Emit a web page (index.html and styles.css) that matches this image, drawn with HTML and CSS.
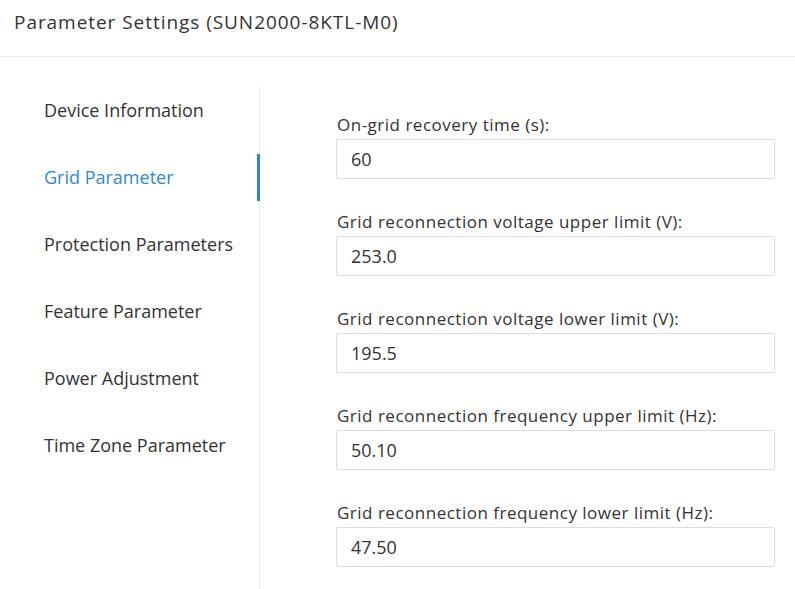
FILE: index.html
```html
<!DOCTYPE html>
<html lang="en">
<head>
<meta charset="utf-8">
<title>Parameter Settings</title>
<link rel="stylesheet" href="styles.css">
</head>
<body>
<header class="page-header">
  <h1 class="page-title">Parameter Settings (SUN2000-8KTL-M0)</h1>
</header>
<main class="layout">
  <nav class="sidebar">
    <ul class="nav-list">
      <li class="nav-item">Device Information</li>
      <li class="nav-item nav-item-active">Grid Parameter</li>
      <li class="nav-item">Protection Parameters</li>
      <li class="nav-item">Feature Parameter</li>
      <li class="nav-item">Power Adjustment</li>
      <li class="nav-item">Time Zone Parameter</li>
    </ul>
  </nav>
  <section class="content">
    <div class="field">
      <label class="field-label">On-grid recovery time (s):</label>
      <input class="field-input" type="text" value="60">
    </div>
    <div class="field">
      <label class="field-label">Grid reconnection voltage upper limit (V):</label>
      <input class="field-input" type="text" value="253.0">
    </div>
    <div class="field">
      <label class="field-label">Grid reconnection voltage lower limit (V):</label>
      <input class="field-input" type="text" value="195.5">
    </div>
    <div class="field">
      <label class="field-label">Grid reconnection frequency upper limit (Hz):</label>
      <input class="field-input" type="text" value="50.10">
    </div>
    <div class="field">
      <label class="field-label">Grid reconnection frequency lower limit (Hz):</label>
      <input class="field-input" type="text" value="47.50">
    </div>
  </section>
</main>
</body>
</html>
```

FILE: styles.css
```css
* {
  box-sizing: border-box;
}

html, body {
  margin: 0;
  padding: 0;
  background: #ffffff;
  height: 100%;
  overflow: hidden;
}

body {
  font-family: "Open Sans", "Noto Sans", sans-serif;
  color: #333333;
}

.page-header {
  height: 57px;
  border-bottom: 1px solid #ebebeb;
  padding-left: 14px;
}

.page-title {
  margin: 0;
  font-size: 19px;
  letter-spacing: 0.95px;
  font-weight: 400;
  line-height: 44px;
  color: #333333;
}

.layout {
  display: flex;
  height: calc(100% - 57px);
}

.sidebar {
  width: 260px;
  flex: none;
  margin-top: 30px;
  border-right: 1px solid #ececec;
}

.nav-list {
  list-style: none;
  margin: 0;
  padding: 0;
  display: flex;
  flex-direction: column;
  gap: 20px;
}

.nav-item {
  height: 47px;
  line-height: 47px;
  padding-left: 44px;
  font-size: 18px;
  color: #333333;
  margin-right: -1px;
  border-right: 3px solid transparent;
}

.nav-item-active {
  color: #2e8bc9;
  border-right-color: #2b87c4;
}

.content {
  flex: 1;
  padding: 57px 20px 0 76px;
}

.field {
  display: flex;
  flex-direction: column;
  margin-bottom: 32px;
}

.field-label {
  font-size: 17px;
  letter-spacing: 0.5px;
  line-height: 22px;
  margin-bottom: 3px;
  padding-left: 1px;
  color: #333333;
}

.field-input {
  width: 439px;
  height: 40px;
  border: 1px solid #dcdcdc;
  border-radius: 2px;
  padding: 0 14px;
  font-family: "Open Sans", "Noto Sans", sans-serif;
  font-size: 18px;
  color: #333333;
  background: #ffffff;
  outline: none;
}
```
